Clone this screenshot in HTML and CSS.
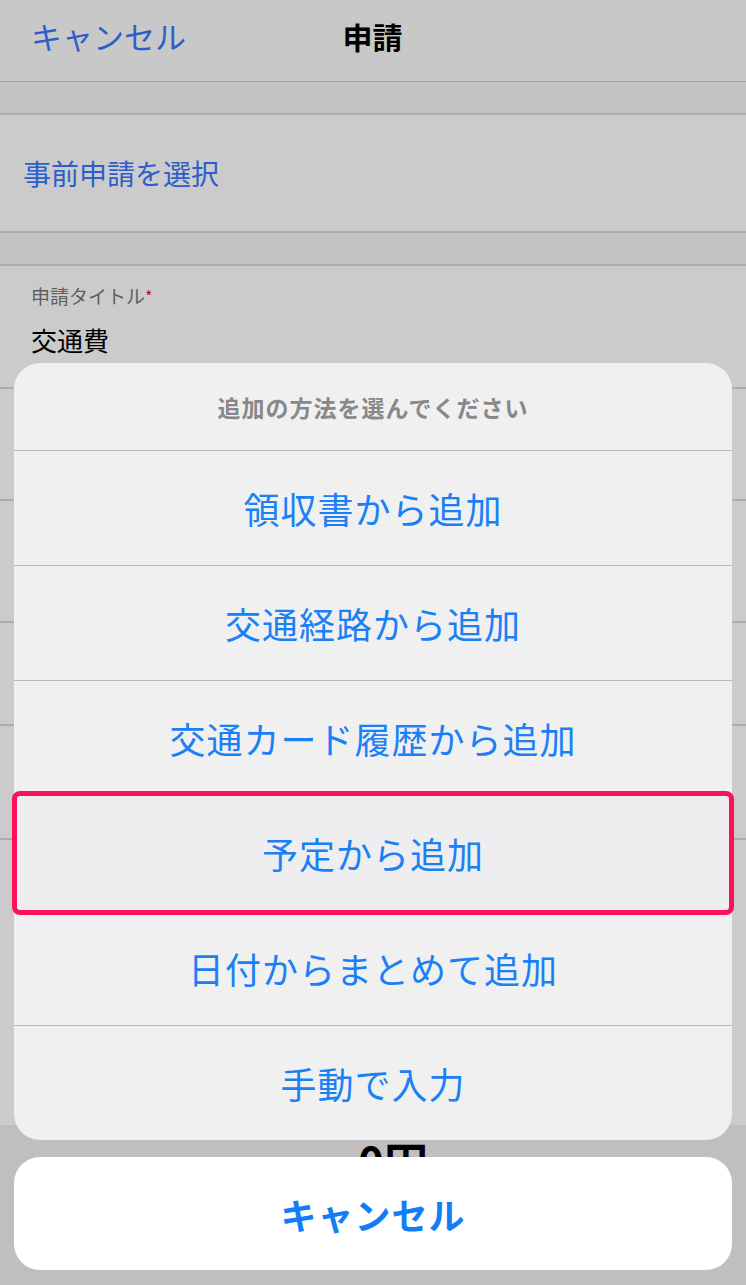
FILE: index.html
```html
<!DOCTYPE html>
<html lang="ja">
<head>
<meta charset="utf-8">
<link rel="stylesheet" href="styles.css">
</head>
<body>
<div class="screen">
  <header class="nav">
    <span class="nav-cancel">キャンセル</span>
    <span class="nav-title">申請</span>
    <span class="nav-spacer"></span>
  </header>
  <div class="gap"></div>
  <div class="row row-link">事前申請を選択</div>
  <div class="gap"></div>
  <div class="row row-field">
    <div class="field-label">申請タイトル<span class="req">*</span></div>
    <div class="field-value">交通費</div>
  </div>
  <div class="row row-a"></div>
  <div class="row row-b"></div>
  <div class="row row-c"></div>
  <div class="row row-d"></div>
  <div class="row row-e"></div>
  <div class="total-area"><span class="total">0円</span></div>

  <div class="sheet-wrap">
    <div class="sheet">
      <div class="sheet-title">追加の方法を選んでください</div>
      <div class="sheet-item">領収書から追加</div>
      <div class="sheet-item">交通経路から追加</div>
      <div class="sheet-item">交通カード履歴から追加</div>
      <div class="sheet-item highlighted">予定から追加</div>
      <div class="sheet-item">日付からまとめて追加</div>
      <div class="sheet-item">手動で入力</div>
    </div>
    <div class="sheet-cancel">キャンセル</div>
  </div>
</div>
</body>
</html>
```

FILE: styles.css
```css
* { box-sizing: border-box; }
html, body { margin: 0; padding: 0; }
body {
  font-family: "Noto Sans CJK JP", "Noto Sans", sans-serif;
  background: #c0bebe;
}
.screen {
  position: relative;
  width: 746px;
  height: 1285px;
  overflow: hidden;
  background: #c0bebe;
}
.nav {
  height: 82px;
  background: #c8c8c8;
  border-bottom: 1px solid #a2a2a2;
  display: flex;
  align-items: flex-start;
  padding: 14px 32px 0 31px;
}
.nav-cancel {
  flex: 1;
  font-size: 31px;
  line-height: 44px;
  color: #2e5ec9;
}
.nav-title {
  font-size: 30px;
  line-height: 44px;
  font-weight: 700;
  color: #000;
}
.nav-spacer { flex: 1; }
.gap {
  height: 33px;
  background: #c4c3c3;
  border-bottom: 2px solid #adadad;
}
.row {
  background: #cbcbcb;
  border-bottom: 2px solid #adadad;
}
.row-link {
  height: 118px;
  display: flex;
  align-items: center;
  padding-left: 23px;
  font-size: 28px;
  color: #2e5ec9;
}
.row-field {
  height: 123px;
  padding: 15px 31px 0 31px;
}
.field-label {
  font-size: 19px;
  line-height: 30px;
  color: #5f5f5f;
}
.req {
  color: #b3112d;
  font-size: 16px;
  vertical-align: 1px;
}
.field-value {
  margin-top: 12px;
  font-size: 26px;
  line-height: 34px;
  color: #000;
}
.row-a { height: 112px; }
.row-b { height: 122px; }
.row-c { height: 103px; }
.row-d { height: 114px; }
.row-e { height: 285px; border-bottom: none; }
.total-area {
  height: 200px;
  background: #c0bebe;
  text-align: center;
  padding-top: 11px;
}
.total {
  font-size: 44px;
  font-weight: 700;
  color: #000;
  line-height: 50px;
  margin-left: 40px;
}

/* action sheet overlay */
.sheet-wrap {
  position: absolute;
  left: 14px;
  top: 363px;
  width: 718px;
  display: flex;
  flex-direction: column;
  gap: 17px;
}
.sheet {
  background: #f0f0f0;
  border-radius: 26px;
  display: flex;
  flex-direction: column;
}
.sheet-title {
  height: 88px;
  display: flex;
  align-items: center;
  justify-content: center;
  font-size: 23px;
  font-weight: 700;
  letter-spacing: 1px;
  color: #888888;
  border-bottom: 1px solid #b9b9b9;
}
.sheet-item {
  position: relative;
  height: 115px;
  display: flex;
  align-items: center;
  justify-content: center;
  font-size: 36px;
  letter-spacing: 1px;
  color: #1a80f5;
  border-bottom: 1px solid #b9b9b9;
}
.sheet-item:last-child { border-bottom: none; height: 114px; }
.highlighted { background: #eeeef1; }
.highlighted::after {
  content: "";
  position: absolute;
  left: -2px;
  right: -2px;
  top: -5px;
  bottom: -5px;
  border: 5px solid #fd1157;
  border-radius: 8px;
}
.sheet-cancel {
  height: 113px;
  background: #ffffff;
  border-radius: 26px;
  display: flex;
  align-items: center;
  justify-content: center;
  font-size: 36px;
  font-weight: 700;
  letter-spacing: 1px;
  color: #117ef5;
}
```
